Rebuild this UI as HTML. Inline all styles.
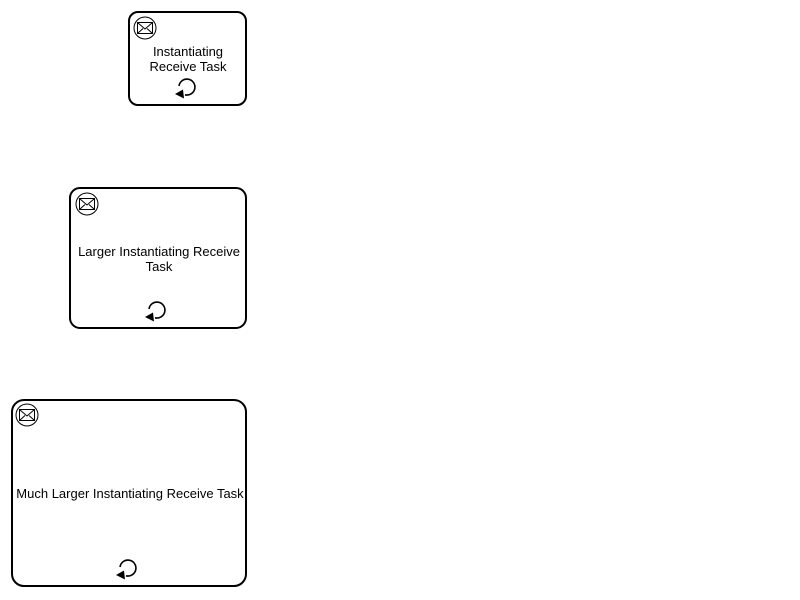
<!DOCTYPE html>
<html><head><style>html,body{margin:0;padding:0;background:#fff;width:800px;height:600px;overflow:hidden}</style></head>
<body>
<svg width="800" height="600" xmlns="http://www.w3.org/2000/svg" style="position:absolute;left:0;top:0" font-family="Liberation Sans, Arial, sans-serif" font-size="13">
<defs>
<g id="env">
<circle cx="0" cy="0" r="11" fill="none" stroke="#000" stroke-width="1"/>
<rect x="-7.5" y="-5.5" width="15" height="11" fill="none" stroke="#000" stroke-width="1"/>
<path d="M-7.5 -5.5 L0 1 L7.5 -5.5 M-7.5 5.5 L-2 0.5 M7.5 5.5 L2 0.5" fill="none" stroke="#000" stroke-width="1"/>
</g>
<g id="loop">
<path d="M-8 -1 A8 8 0 1 1 -2 7.8" fill="none" stroke="#000" stroke-width="1.6"/>
<path d="M-12 7 L-4 2.5 L-3 11.5 Z" fill="#000"/>
</g>
</defs>
<rect x="129" y="12" width="117" height="93" rx="9" fill="#fff" stroke="#000" stroke-width="2"/>
<use href="#env" x="145" y="28"/>
<text x="188" y="56" text-anchor="middle">Instantiating</text>
<text x="188" y="71" text-anchor="middle">Receive Task</text>
<use href="#loop" x="187" y="87"/>

<rect x="70" y="188" width="176" height="140" rx="10" fill="#fff" stroke="#000" stroke-width="2"/>
<use href="#env" x="87" y="204"/>
<text x="159" y="256" text-anchor="middle">Larger Instantiating Receive</text>
<text x="159" y="271" text-anchor="middle">Task</text>
<use href="#loop" x="157" y="310"/>

<rect x="12" y="400" width="234" height="186" rx="12" fill="#fff" stroke="#000" stroke-width="2"/>
<use href="#env" x="27" y="415"/>
<text x="130" y="498" text-anchor="middle">Much Larger Instantiating Receive Task</text>
<use href="#loop" x="128" y="568"/>
</svg>
</body></html>
